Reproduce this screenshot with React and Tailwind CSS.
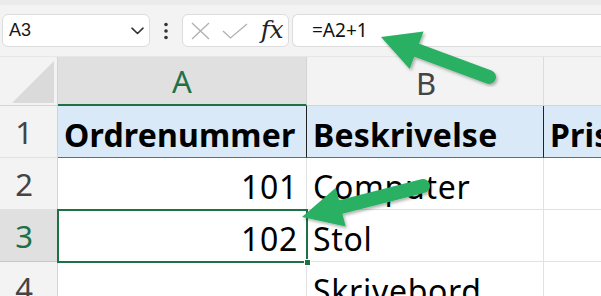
import React from "react";

function Row({ num, selected, a, b, header }) {
  return (
    <div className="flex h-[52px] shrink-0">
      <div
        className={
          "w-[58px] shrink-0 flex items-center justify-center pr-[9px] text-[31px] border-r border-b " +
          (selected
            ? "bg-[#e0e0e0] text-[#1e7145] border-r-[#c8c8c8] border-b-[#c8c8c8]"
            : "bg-[#f3f3f3] text-[#444444] border-r-[#d4d4d4] border-b-[#e1e1e1]")
        }
      >
        <span className="leading-none mt-[2px]">{num}</span>
      </div>
      <div
        className={
          "w-[249px] shrink-0 flex items-end pb-[6px] px-[6px] text-[32px] leading-none text-black " +
          (header
            ? "bg-[#dae9f8] font-bold tracking-[0.2px] border-r border-r-[#222] border-b border-b-[#6b6b6b] justify-start"
            : "bg-white tracking-[0.7px] border-r border-r-[#e1e1e1] border-b border-b-[#e1e1e1] justify-end pr-[8px]")
        }
      >
        {a}
      </div>
      <div
        className={
          "w-[237px] shrink-0 flex items-end pb-[6px] px-[6px] text-[32px] leading-none text-black " +
          (header
            ? "bg-[#dae9f8] font-bold tracking-[0.2px] border-r border-r-[#222] border-b border-b-[#6b6b6b]"
            : "bg-white tracking-[0.7px] border-r border-r-[#e1e1e1] border-b border-b-[#e1e1e1]")
        }
      >
        {b}
      </div>
      <div
        className={
          "flex-1 flex items-end pb-[6px] px-[6px] text-[32px] leading-none text-black " +
          (header
            ? "bg-[#dae9f8] font-bold tracking-[0.2px] border-b border-b-[#6b6b6b]"
            : "bg-white border-b border-b-[#e1e1e1]")
        }
      >
        {header ? "Pris" : ""}
      </div>
    </div>
  );
}

function Arrow({ tail, tip, width = 12, head = 40, headW = 40 }) {
  const [tx, ty] = tail;
  const [px, py] = tip;
  const dx = px - tx;
  const dy = py - ty;
  const len = Math.hypot(dx, dy);
  const ux = dx / len;
  const uy = dy / len;
  const nx = -uy;
  const ny = ux;
  const bx = px - ux * head;
  const by = py - uy * head;
  const c1 = [bx + (nx * headW) / 2, by + (ny * headW) / 2];
  const c2 = [bx - (nx * headW) / 2, by - (ny * headW) / 2];
  const sx = bx + ux * 4;
  const sy = by + uy * 4;
  return (
    <g filter="url(#sh)">
      <line x1={tx} y1={ty} x2={sx} y2={sy} stroke="#2bb063" strokeWidth={width} strokeLinecap="round" />
      <polygon points={`${px},${py} ${c1[0]},${c1[1]} ${c2[0]},${c2[1]}`} fill="#2bb063" />
    </g>
  );
}

export default function App() {
  return (
    <div
      className="relative w-[601px] h-[296px] overflow-hidden bg-white flex flex-col"
      style={{ fontFamily: "'Noto Sans', 'Liberation Sans', sans-serif" }}
    >
      {/* top strip */}
      <div className="h-[5px] shrink-0 bg-[#ebebeb] shadow-[0_1px_2px_rgba(0,0,0,0.1)]" />
      {/* formula bar */}
      <div className="h-[52px] shrink-0 bg-[#f3f3f3] flex items-center pl-[2px] border-b border-b-[#e6e6e6]">
        <div className="w-[148px] h-[33px] shrink-0 bg-white border border-[#dcdcdc] rounded-[6px] flex items-center justify-between pl-[6px] pr-[5px]">
          <span className="text-[18px] text-[#1a1a1a]" style={{ fontFamily: "'Liberation Sans', sans-serif" }}>
            A3
          </span>
          <svg width="13" height="8" viewBox="0 0 13 8">
            <path d="M1 1.2 L6.5 6.5 L12 1.2" fill="none" stroke="#333" strokeWidth="1.6" strokeLinecap="round" strokeLinejoin="round" />
          </svg>
        </div>
        <div className="w-[32px] shrink-0 flex justify-center">
          <svg width="4" height="18" viewBox="0 0 4 18">
            <circle cx="2" cy="2.5" r="1.8" fill="#333" />
            <circle cx="2" cy="9" r="1.8" fill="#333" />
            <circle cx="2" cy="15.5" r="1.8" fill="#333" />
          </svg>
        </div>
        <div className="w-[107px] h-[33px] shrink-0 bg-white border border-[#dcdcdc] rounded-[6px] flex items-center pl-[8px] pr-[5px] justify-between">
          <svg width="19" height="18" viewBox="0 0 19 18">
            <path d="M1 1 L18 17 M18 1 L1 17" stroke="#b0b0b0" strokeWidth="1.3" />
          </svg>
          <svg width="26" height="16" viewBox="0 0 26 16">
            <path d="M1 8 L8.5 15 L25 1" fill="none" stroke="#b0b0b0" strokeWidth="1.3" />
          </svg>
          <span
            className="text-[25px] italic text-[#222] leading-none mb-[3px] tracking-[-0.5px]"
            style={{ fontFamily: "'DejaVu Serif', 'Liberation Serif', serif" }}
          >
            fx
          </span>
        </div>
        <div className="w-[3px] shrink-0" />
        <div className="flex-1 h-[33px] bg-white border border-[#dcdcdc] border-r-0 rounded-l-[6px] flex items-center pl-[19px]">
          <span className="text-[19px] text-[#111]" style={{ fontFamily: "'Noto Sans', sans-serif" }}>
            =A2+1
          </span>
        </div>
      </div>
      {/* column header */}
      <div className="flex h-[49px] shrink-0 bg-[#f3f3f3]">
        <div className="w-[58px] shrink-0 relative border-r border-r-[#d4d4d4] border-b border-b-[#d4d4d4]">
          <svg className="absolute right-[3px] bottom-[2px]" width="42" height="42" viewBox="0 0 42 42">
            <polygon points="42,0 42,42 0,42" fill="#dadada" />
          </svg>
        </div>
        <div className="w-[249px] shrink-0 bg-[#e0e0e0] border-r border-r-[#d4d4d4] border-b-2 border-b-[#1e7145] flex items-center justify-center text-[31px] text-[#1e7145]">
          <span className="mt-[2px]">A</span>
        </div>
        <div className="w-[237px] shrink-0 border-r border-r-[#dcdcdc] border-b border-b-[#d4d4d4] flex items-center justify-center text-[31px] text-[#444]">
          <span className="mt-[4px] ml-[2px]">B</span>
        </div>
        <div className="flex-1 border-b border-b-[#d4d4d4]" />
      </div>
      <Row num="1" header a="Ordrenummer" b="Beskrivelse" />
      <Row num="2" a="101" b="Computer" />
      <Row num="3" selected a="102" b="Stol" />
      <Row num="4" a="" b="Skrivebord" />

      {/* selection */}
      <div className="absolute left-[57px] top-[209px] w-[251px] h-[54px] border-2 border-[#1e7145] pointer-events-none" />
      <div className="absolute left-[304px] top-[259px] w-[7px] h-[7px] bg-[#1e7145] border border-white" />

      {/* arrows */}
      <svg className="absolute inset-0 pointer-events-none" width="601" height="296" viewBox="0 0 601 296">
        <defs>
          <filter id="sh" x="-20%" y="-20%" width="140%" height="140%">
            <feDropShadow dx="1.5" dy="2" stdDeviation="1.5" floodColor="#000" floodOpacity="0.3" />
          </filter>
        </defs>
        <Arrow tail={[489, 77]} tip={[381, 37]} width={14} head={38} headW={40} />
        <Arrow tail={[423, 186]} tip={[302, 217]} width={14} head={40} headW={40} />
      </svg>
    </div>
  );
}
